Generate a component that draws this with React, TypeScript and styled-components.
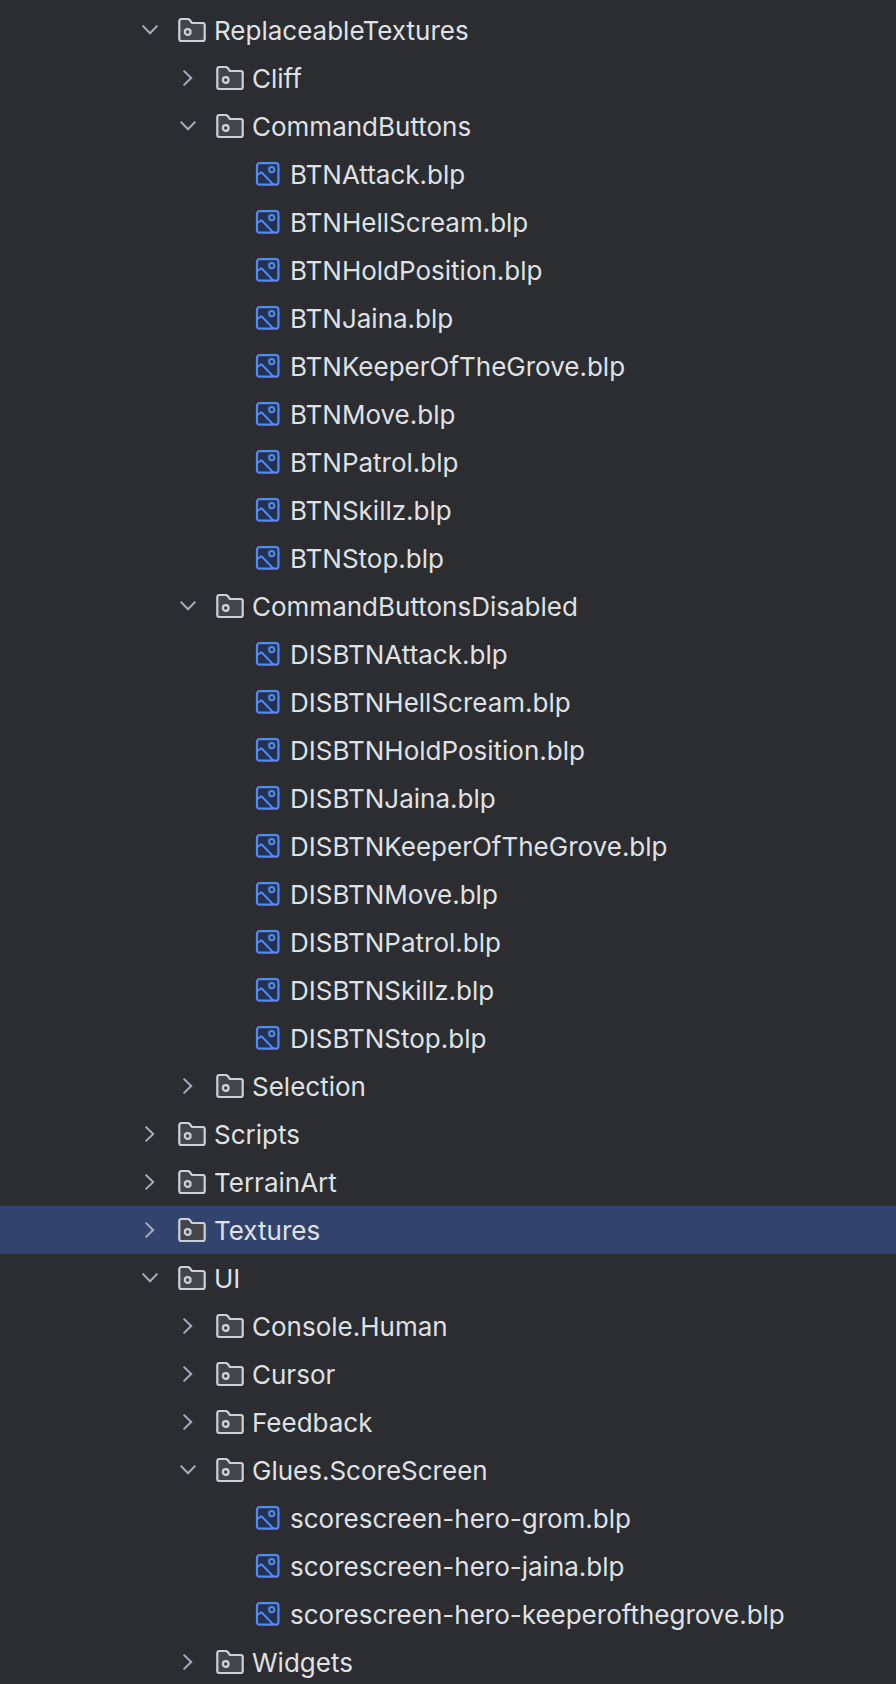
import React from "react";
import styled, { createGlobalStyle } from "styled-components";

const Global = createGlobalStyle`
  html, body { margin: 0; padding: 0; background: #2b2d30; overflow: hidden; }
  body { height: 1684px; }
`;

const Tree = styled.div`
  height: 1684px;
  overflow: hidden;
  padding-top: 6px;
  box-sizing: border-box;
  background: #2b2d30;
  font-family: Inter, "Liberation Sans", sans-serif;
  font-size: 26px;
  color: #dfe1e5;
`;

const Row = styled.div<{ $level: number; $selected?: boolean }>`
  height: 48px;
  display: flex;
  align-items: center;
  padding-left: ${(p) => 134 + p.$level * 38}px;
  background: ${(p) => (p.$selected ? "#32446d" : "transparent")};
  white-space: nowrap;
`;

const ChevronSlot = styled.span`
  width: 32px;
  height: 32px;
  margin-right: 10px;
  flex: none;
`;

const IconSlot = styled.svg`
  width: 32px;
  height: 32px;
  flex: none;
  margin-right: 6px;
  display: block;
`;

const ChevronSvg = styled.svg`
  width: 32px;
  height: 32px;
  display: block;
  fill: none;
  stroke: #a8adbd;
  stroke-width: 1;
`;

const Chevron = ({ open }: { open: boolean }) => (
  <ChevronSlot>
    <ChevronSvg viewBox="0 0 16 16">
      {open ? <path d="M4.3 5.8L8 9.6l3.7-3.8" /> : <path d="M5.8 4.3L9.6 8l-3.8 3.7" />}
    </ChevronSvg>
  </ChevronSlot>
);

const FolderIcon = () => (
  <IconSlot viewBox="0 0 16 16">
    <path
      d="M1.65 3.5a1 1 0 0 1 1-1h3.3c.3 0 .6.1.8.4L8 4.5h5.35a1 1 0 0 1 1 1v7a1 1 0 0 1-1 1H2.65a1 1 0 0 1-1-1z"
      fill="#43454a"
      stroke="#ced0d6"
      strokeWidth="1.1"
    />
    <circle cx="5.85" cy="9" r="1.45" fill="none" stroke="#ced0d6" strokeWidth="1.1" />
  </IconSlot>
);

const ImageIcon = () => (
  <IconSlot viewBox="0 0 16 16">
    <rect x="2.5" y="2.6" width="10.7" height="10.7" rx="1.2" fill="#25324d" stroke="#548af7" strokeWidth="1.1" />
    <circle cx="9.85" cy="5.85" r="1.3" fill="none" stroke="#548af7" strokeWidth="1" />
    <path d="M2.5 8.6L4.8 7.1l5.9 6.2" fill="none" stroke="#548af7" strokeWidth="1" />
  </IconSlot>
);

type Node = { name: string; level: number; kind: "open" | "closed" | "file"; selected?: boolean };

const folder = (name: string, level: number, open = false, selected = false): Node => ({
  name,
  level,
  kind: open ? "open" : "closed",
  selected,
});
const file = (name: string): Node => ({ name, level: 2, kind: "file" });
const buttons = ["Attack", "HellScream", "HoldPosition", "Jaina", "KeeperOfTheGrove", "Move", "Patrol", "Skillz", "Stop"];

const nodes: Node[] = [
  folder("ReplaceableTextures", 0, true),
  folder("Cliff", 1),
  folder("CommandButtons", 1, true),
  ...buttons.map((b) => file(`BTN${b}.blp`)),
  folder("CommandButtonsDisabled", 1, true),
  ...buttons.map((b) => file(`DISBTN${b}.blp`)),
  folder("Selection", 1),
  folder("Scripts", 0),
  folder("TerrainArt", 0),
  folder("Textures", 0, false, true),
  folder("UI", 0, true),
  folder("Console.Human", 1),
  folder("Cursor", 1),
  folder("Feedback", 1),
  folder("Glues.ScoreScreen", 1, true),
  file("scorescreen-hero-grom.blp"),
  file("scorescreen-hero-jaina.blp"),
  file("scorescreen-hero-keeperofthegrove.blp"),
  folder("Widgets", 1),
];

export default function App() {
  return (
    <>
      <Global />
      <Tree>
        {nodes.map((n, i) => (
          <Row key={i} $level={n.level} $selected={n.selected}>
            {n.kind === "file" ? <ChevronSlot /> : <Chevron open={n.kind === "open"} />}
            {n.kind === "file" ? <ImageIcon /> : <FolderIcon />}
            {n.name}
          </Row>
        ))}
      </Tree>
    </>
  );
}
